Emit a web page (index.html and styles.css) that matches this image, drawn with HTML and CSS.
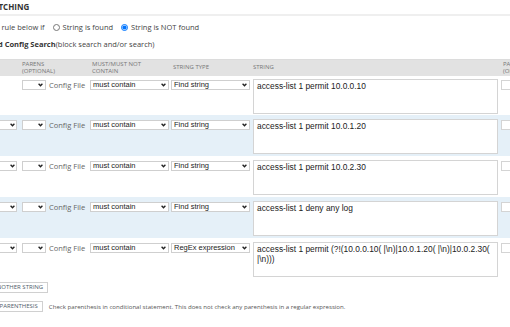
FILE: index.html
```html
<!DOCTYPE html>
<html lang="en">
<head>
    <meta charset="UTF-8">
    <title>String Matching</title>
    <link rel="stylesheet" href="styles.css">
</head>
<body>
    <div class="page">
        <h2 class="title">String Matching</h2>

        <div class="rule-line">
            Apply rule below if
            <label class="radio"><input type="radio" name="found"> String is found</label>
            <label class="radio"><input type="radio" name="found" checked> String is NOT found</label>
        </div>

        <div class="advanced"><b>Advanced Config Search</b>(block search and/or search)</div>

        <div class="strings">
            <div class="row head">
                <div></div>
                <div>Parens<br>(optional)</div>
                <div></div>
                <div class="pad">Must/must not<br>contain</div>
                <div class="pad">String type</div>
                <div>String</div>
                <div class="pad">Parens<br>(optional)</div>
            </div>

            <div class="row">
                <div></div>
                <div class="select sm"><select><option></option></select><svg viewBox="0 0 5 4"><polyline points="0.6,0.7 2.5,2.8 4.4,0.7"/></svg></div>
                <div class="src">Config File</div>
                <div class="select md"><select><option>must contain</option></select><svg viewBox="0 0 5 4"><polyline points="0.6,0.7 2.5,2.8 4.4,0.7"/></svg></div>
                <div class="select md"><select><option>Find string</option></select><svg viewBox="0 0 5 4"><polyline points="0.6,0.7 2.5,2.8 4.4,0.7"/></svg></div>
                <div><textarea>access-list 1 permit 10.0.0.10</textarea></div>
                <div><input class="paren-box" type="text"></div>
            </div>

            <div class="row alt">
                <div class="select op"><select><option>AND</option></select><svg viewBox="0 0 5 4"><polyline points="0.6,0.7 2.5,2.8 4.4,0.7"/></svg></div>
                <div class="select sm"><select><option></option></select><svg viewBox="0 0 5 4"><polyline points="0.6,0.7 2.5,2.8 4.4,0.7"/></svg></div>
                <div class="src">Config File</div>
                <div class="select md"><select><option>must contain</option></select><svg viewBox="0 0 5 4"><polyline points="0.6,0.7 2.5,2.8 4.4,0.7"/></svg></div>
                <div class="select md"><select><option>Find string</option></select><svg viewBox="0 0 5 4"><polyline points="0.6,0.7 2.5,2.8 4.4,0.7"/></svg></div>
                <div><textarea>access-list 1 permit 10.0.1.20</textarea></div>
                <div><input class="paren-box" type="text"></div>
            </div>

            <div class="row">
                <div class="select op"><select><option>AND</option></select><svg viewBox="0 0 5 4"><polyline points="0.6,0.7 2.5,2.8 4.4,0.7"/></svg></div>
                <div class="select sm"><select><option></option></select><svg viewBox="0 0 5 4"><polyline points="0.6,0.7 2.5,2.8 4.4,0.7"/></svg></div>
                <div class="src">Config File</div>
                <div class="select md"><select><option>must contain</option></select><svg viewBox="0 0 5 4"><polyline points="0.6,0.7 2.5,2.8 4.4,0.7"/></svg></div>
                <div class="select md"><select><option>Find string</option></select><svg viewBox="0 0 5 4"><polyline points="0.6,0.7 2.5,2.8 4.4,0.7"/></svg></div>
                <div><textarea>access-list 1 permit 10.0.2.30</textarea></div>
                <div><input class="paren-box" type="text"></div>
            </div>

            <div class="row alt">
                <div class="select op"><select><option>AND</option></select><svg viewBox="0 0 5 4"><polyline points="0.6,0.7 2.5,2.8 4.4,0.7"/></svg></div>
                <div class="select sm"><select><option></option></select><svg viewBox="0 0 5 4"><polyline points="0.6,0.7 2.5,2.8 4.4,0.7"/></svg></div>
                <div class="src">Config File</div>
                <div class="select md"><select><option>must contain</option></select><svg viewBox="0 0 5 4"><polyline points="0.6,0.7 2.5,2.8 4.4,0.7"/></svg></div>
                <div class="select md"><select><option>Find string</option></select><svg viewBox="0 0 5 4"><polyline points="0.6,0.7 2.5,2.8 4.4,0.7"/></svg></div>
                <div><textarea>access-list 1 deny any log</textarea></div>
                <div><input class="paren-box" type="text"></div>
            </div>

            <div class="row">
                <div class="select op"><select><option>AND</option></select><svg viewBox="0 0 5 4"><polyline points="0.6,0.7 2.5,2.8 4.4,0.7"/></svg></div>
                <div class="select sm"><select><option></option></select><svg viewBox="0 0 5 4"><polyline points="0.6,0.7 2.5,2.8 4.4,0.7"/></svg></div>
                <div class="src">Config File</div>
                <div class="select md"><select><option>must contain</option></select><svg viewBox="0 0 5 4"><polyline points="0.6,0.7 2.5,2.8 4.4,0.7"/></svg></div>
                <div class="select md"><select><option>RegEx expression</option></select><svg viewBox="0 0 5 4"><polyline points="0.6,0.7 2.5,2.8 4.4,0.7"/></svg></div>
                <div><textarea>access-list 1 permit (?!(10.0.0.10( |\n)|10.0.1.20( |\n)|10.0.2.30( |\n)))</textarea></div>
                <div><input class="paren-box" type="text"></div>
            </div>
        </div>

        <div class="actions">
            <button class="btn">Add another string</button>
        </div>
        <div class="actions check">
            <button class="btn">Check parenthesis</button>
            <span class="hint">Check parenthesis in conditional statement. This does not check any parenthesis in a regular expression.</span>
        </div>
    </div>
</body>
</html>
```

FILE: styles.css
```css
body {
    margin: 0;
    font-family: 'Open Sans', sans-serif;
    color: #333;
    background: #fff;
    overflow: hidden;
}

.page {
    margin-left: -50px;
    width: 640px;
}

.title {
    margin: 0;
    padding-left: 4px;
    font-size: 8px;
    font-weight: 700;
    line-height: 14px;
    height: 14px;
    text-transform: uppercase;
    color: #333;
    border-bottom: 2px solid #efefef;
}

.rule-line {
    padding-left: 30px;
    padding-top: 3px;
    font-size: 7.5px;
    line-height: 17px;
    color: #444;
}

.radio {
    margin-left: 6px;
}

.radio input {
    width: 7px;
    height: 7px;
    margin: 0 1px 0 0;
    vertical-align: -1px;
}

.advanced {
    padding-left: 16px;
    font-size: 7.5px;
    line-height: 17px;
    color: #444;
    margin-bottom: 6px;
}

.advanced b {
    color: #333;
}

.strings {
    border-top: 1px solid #dcdcdc;
    padding-left: 35px;
}

.row {
    display: grid;
    grid-template-columns: 37px 27px 41px 81px 82px 248px 40px;
    height: 41px;
    padding-top: 4px;
    box-sizing: border-box;
    margin-left: -35px;
    padding-left: 35px;
}

.row:nth-child(2) {
    height: 39px;
    padding-top: 3px;
}

.row.alt {
    background: #e5f0f8;
}

.row.head {
    height: 16px;
    padding-top: 0;
    align-items: center;
    background: #e2e2e2;
    font-size: 6px;
    line-height: 7.5px;
    text-transform: uppercase;
    color: #777;
}

.row.head .pad {
    padding-left: 2px;
}

.select {
    position: relative;
    height: 10px;
    margin-top: 1px;
}

.select select {
    appearance: none;
    -webkit-appearance: none;
    display: block;
    height: 10px;
    margin: 0;
    padding: 0 0 0 2px;
    border: 1px solid #cfcfcf;
    border-radius: 0;
    background: #fff;
    font-family: 'Liberation Sans', Arial, sans-serif;
    font-size: 7.5px;
    line-height: 8px;
    color: #222;
    box-sizing: border-box;
}

.select svg {
    position: absolute;
    top: 3px;
    width: 5px;
    height: 4px;
    fill: none;
    stroke: #222;
    stroke-width: 1.3;
}

.select.op select { width: 45px; margin-left: -13px; }
.select.op svg { left: 25px; }

.select.sm select { width: 24px; }
.select.sm svg { left: 16px; }

.select.md select { width: 79px; }
.select.md svg { left: 71px; }

.src {
    margin-top: 1px;
    font-size: 7.5px;
    line-height: 10px;
    color: #666;
}

textarea {
    display: block;
    width: 245px;
    height: 35px;
    margin: 0;
    padding: 1px 3px;
    border: 1px solid #d4d4d4;
    box-sizing: border-box;
    resize: none;
    font-family: 'Liberation Sans', Arial, sans-serif;
    font-size: 8.4px;
    line-height: 10px;
    color: #222;
    background: #fff;
}

.paren-box {
    display: block;
    width: 28px;
    height: 10px;
    margin: 1px 0 0 0;
    padding: 0;
    border: 1px solid #d4d4d4;
    box-sizing: border-box;
}

.actions {
    padding-left: 24px;
    margin-top: 3px;
    display: flex;
    align-items: center;
}

.actions.check {
    margin-top: 8px;
}

.btn {
    height: 11px;
    padding: 0 4px;
    border: 1px solid #d0d0d0;
    background: #fff;
    font-family: 'Open Sans', sans-serif;
    font-size: 6px;
    line-height: 9px;
    text-transform: uppercase;
    color: #4f5d6b;
}

.hint {
    margin-left: 6px;
    font-size: 6.1px;
    color: #555;
}
```
